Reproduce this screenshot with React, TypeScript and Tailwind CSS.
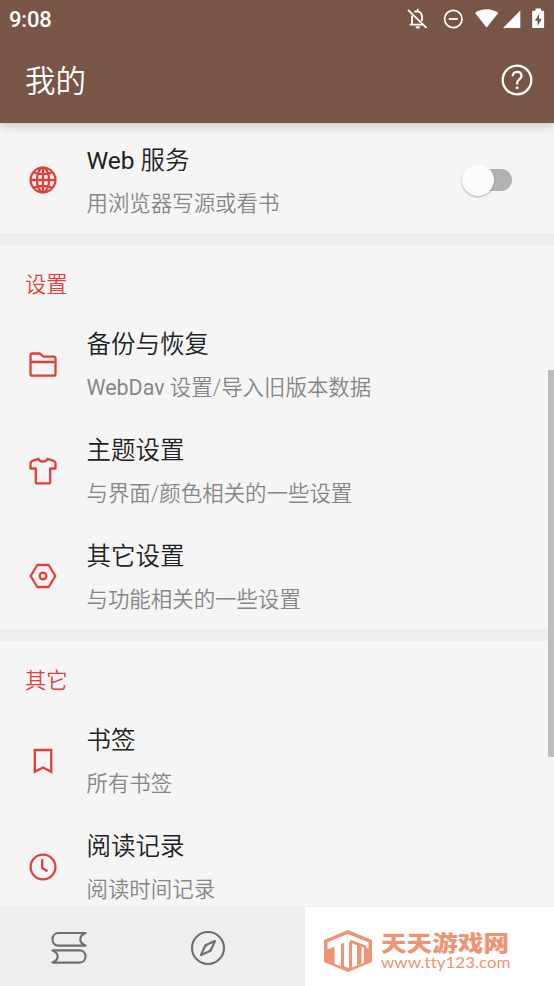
import type { ReactNode } from 'react';

const iconProps = {
  fill: 'none',
  stroke: 'currentColor',
  strokeWidth: 2.3,
  strokeLinejoin: 'round' as const,
};

function GlobeIcon() {
  return (
    <svg width="28" height="28" viewBox="0 0 28 28" {...iconProps} strokeWidth={2.3}>
      <circle cx="14" cy="14" r="12.4" />
      <ellipse cx="14" cy="14" rx="6" ry="12.4" />
      <path d="M14 1.6v24.8M1.6 14h24.8M4.6 6.2c5.4 2.6 13.4 2.6 18.8 0M4.6 21.8c5.4-2.6 13.4-2.6 18.8 0" />
    </svg>
  );
}

function FolderIcon() {
  return (
    <svg width="28" height="28" viewBox="0 0 28 28" {...iconProps}>
      <path d="M1.5 23V4.3C1.5 3 2.2 2.5 3.3 2.5h7.4l3.8 3.2h10c1.3 0 2 .7 2 1.8V23c0 1-.7 1.7-1.8 1.7H3.3c-1.1 0-1.8-.7-1.8-1.7zM1.5 11h25" />
    </svg>
  );
}

function ShirtIcon() {
  return (
    <svg width="28" height="28" viewBox="0 0 28 28" {...iconProps}>
      <path d="M9.5 1.8L4 3.6C2.4 4.2 1.5 5.2 1.5 6.8v4.7h5.3v13.2c0 1.1.6 1.7 1.7 1.7h11c1.1 0 1.7-.6 1.7-1.7V11.5h5.3V6.8c0-1.6-.9-2.6-2.5-3.2l-5.5-1.8C17.3 5.4 10.7 5.4 9.5 1.8z" />
    </svg>
  );
}

function NutIcon() {
  return (
    <svg width="28" height="28" viewBox="0 0 28 28" {...iconProps}>
      <path d="M8.3 3h11.4l6.6 11-6.6 11H8.3L1.7 14z" />
      <circle cx="14" cy="14" r="3.3" />
    </svg>
  );
}

function BookmarkIcon() {
  return (
    <svg width="28" height="28" viewBox="0 0 28 28" {...iconProps} strokeLinejoin="miter">
      <path d="M5.8 3h16.4v21.8L14 20.6l-8.2 4.2z" />
    </svg>
  );
}

function ClockIcon() {
  return (
    <svg width="28" height="28" viewBox="0 0 28 28" {...iconProps}>
      <circle cx="14" cy="14" r="12.4" />
      <path d="M13.2 6.3v8.6l5.3 3.3" />
    </svg>
  );
}

function StatusIcons() {
  return (
    <svg width="140" height="24" viewBox="0 0 140 24" fill="none" className="text-white">
      {/* muted bell */}
      <g stroke="currentColor" strokeWidth="1.8">
        <path d="M2 2.8l18.5 18" />
        <path d="M6 8.500v8.500M3.800 17.700h13M8.300 5c3.400-2 7.700.3 7.700 4.600v4.300M11.700 1.800v2" />
        <path d="M9.800 20.400h4" strokeWidth="2" />
      </g>
      {/* do not disturb */}
      <circle cx="47.300" cy="12" r="8.700" stroke="currentColor" strokeWidth="1.700" />
      <path d="M42.800 12h9" stroke="currentColor" strokeWidth="1.800" />
      {/* wifi, signal */}
      <path d="M69 6c6.800-5 16.500-5 23.300 0L80.600 20.500z" fill="currentColor" />
      <path d="M97 21L114.300 3.500V21z" fill="currentColor" />
      {/* battery */}
      <path d="M129.500 1.500h5.500v2.200h2c.7 0 1.100.4 1.100 1.100V20c0 .7-.4 1.100-1.100 1.100h-9.700c-.7 0-1.100-.4-1.100-1.100V4.800c0-.7.400-1.100 1.100-1.100h2.200z" fill="currentColor" />
      <path d="M133.100 6.700l-4.200 7h2.700v5.300l4.200-7.200h-2.700z" fill="#795548" />
    </svg>
  );
}

function BooksIcon() {
  return (
    <svg width="36" height="34" viewBox="0 0 36 34" {...iconProps} strokeWidth={2.2}>
      <path d="M34.500 2H7.500C3.800 2 1.500 4.900 1.500 8.300s2.300 6.300 6 6.300h27c-2.800-1.200-5.200-3.300-5.200-6.300S31.700 3.200 34.500 2z" />
      <path d="M1.500 19.400h27c3.700 0 6 2.700 6 6.100s-2.300 6.100-6 6.100h-27c2.800-1.200 5.200-3.100 5.200-6.100s-2.400-4.900-5.200-6.100z" />
    </svg>
  );
}

function CompassIcon() {
  return (
    <svg width="36" height="36" viewBox="0 0 36 36" {...iconProps} strokeWidth={2.1}>
      <circle cx="18" cy="18" r="16" />
      <path d="M25 11l-4.300 9.700L11 25l4.300-9.700zM15.500 15.300l5 5.200" />
      <circle cx="18" cy="18" r="2" fill="#eee" stroke="none" />
    </svg>
  );
}

function SiteLogo() {
  return (
    <svg width="50" height="44" viewBox="0 0 50 44">
      <path d="M25 1L49 11v22L25 43 1 33V11z" fill="#ee9475" />
      {/* left arm and post */}
      <path d="M4.500 13.200L24.500 5v7.500l-6.500 2.500v22.500l-6.500-2.700V17.800L4.500 20.300z" fill="#fff" />
      {/* corner column */}
      <path d="M21 13.500l5-2V39l-5-1.800z" fill="#fff" />
      {/* right arm and post */}
      <path d="M24.500 5L45.500 13.200v6.600L41 18v15.800l-12 4.800V14l-4.500-2z" fill="#fff" />
      <path d="M27 10.500l16.500 6.300v2.900l-5-1.900v16.700l-4.500 1.700V16.200L27 13.500z" fill="#ee9475" />
    </svg>
  );
}

function Row({ icon, title, summary, children }: { icon: ReactNode; title: ReactNode; summary: ReactNode; children?: ReactNode }) {
  return (
    <div className="h-[105.8px] shrink-0 flex items-center pl-[29px] pr-[42px]">
      <div className="w-[57.5px] shrink-0 text-[#e0403b]">{icon}</div>
      <div className="flex-1 pt-[3px]">
        <div className="text-[24.5px] leading-[44px] text-[#212121]">{title}</div>
        <div className="text-[21.45px] leading-[42.6px] text-[#868686]">{summary}</div>
      </div>
      {children}
    </div>
  );
}

function SectionTitle({ children }: { children: ReactNode }) {
  return (
    <h2 className="h-[66.6px] shrink-0 pl-[25px] pt-[20px] text-[21.3px] leading-[40px] text-[#e0403b]">
      {children}
    </h2>
  );
}

function Divider() {
  return <div className="h-3 shrink-0 bg-[#eeeeee]" />;
}

export default function App() {
  return (
    <div className="h-[986px] w-[554px] flex flex-col overflow-hidden bg-[#f5f5f5] font-[350] font-[Roboto,'Noto_Sans_CJK_SC',sans-serif]">
      {/* Header */}
      <header className="relative z-10 h-[123px] shrink-0 bg-[#795548] text-white shadow-[0_2px_10px_rgba(0,0,0,0.22)]">
        <div className="h-[38px] flex items-center justify-between pl-[9px] pr-[8px]">
          <span className="pt-0.5 text-[22px] font-medium leading-[38px] tracking-[-0.2px]">9:08</span>
          <StatusIcons />
        </div>
        <div className="h-[84px] flex items-center justify-between pl-[25px] pr-[21px]">
          <h1 className="pt-[3px] text-[30.5px] leading-[44px]">我的</h1>
          <svg width="32" height="32" viewBox="0 0 32 32" fill="none" stroke="currentColor" strokeWidth="2.3">
            <circle cx="16" cy="16" r="14.3" />
            <path d="M11.7 12.3c0-2.6 1.8-4.5 4.4-4.5s4.4 1.7 4.4 4.1c0 3.4-4.3 3.7-4.3 7v1.6" />
            <circle cx="16.2" cy="23.8" r="1.4" fill="currentColor" stroke="none" />
          </svg>
        </div>
      </header>

      {/* Settings list */}
      <main className="flex-1 min-h-0 flex overflow-hidden">
        <div className="flex-1 flex flex-col pt-[4.5px]">
          <Row icon={<GlobeIcon />} title={<><span className="font-normal">Web</span> 服务</>} summary="用浏览器写源或看书">
            <div className="w-[50px] h-8 flex items-center">
              <div className="ml-[6px] w-11 h-[22px] rounded-full bg-[#b2b2b2] flex items-center">
                <div className="-ml-[6px] w-8 h-8 shrink-0 rounded-full bg-[#fcfcfc] shadow-[0_1px_2px_rgba(0,0,0,0.3)]" />
              </div>
            </div>
          </Row>
          <Divider />
          <SectionTitle>设置</SectionTitle>
          <Row icon={<FolderIcon />} title="备份与恢复" summary={<><span className="font-normal">WebDav</span> 设置/导入旧版本数据</>} />
          <Row icon={<ShirtIcon />} title="主题设置" summary="与界面/颜色相关的一些设置" />
          <Row icon={<NutIcon />} title="其它设置" summary="与功能相关的一些设置" />
          <Divider />
          <SectionTitle>其它</SectionTitle>
          <Row icon={<BookmarkIcon />} title="书签" summary="所有书签" />
          <Row icon={<ClockIcon />} title="阅读记录" summary="阅读时间记录" />
        </div>
        <div className="-ml-[6px] mt-[247px] w-[6px] h-[387px] bg-[#bdbdbd]" />
      </main>

      {/* Bottom navigation */}
      <nav className="h-20 shrink-0 flex bg-[#eeeeee] text-[#6f6f6f]">
        <div className="w-[138px] flex items-center justify-center pt-[3px]">
          <BooksIcon />
        </div>
        <div className="w-[139px] flex items-center justify-center pt-[3px]">
          <CompassIcon />
        </div>
        <div className="ml-auto w-[249px] mt-px bg-white flex items-center pl-[18px] pt-2 gap-2">
          <SiteLogo />
          <div className="text-[#ee9475]">
            <div className="text-[25.6px] leading-[22px] h-[22px] scale-y-[0.84] font-black whitespace-nowrap">天天游戏网</div>
            <div className="origin-left scale-x-[1.06] font-[Lato,sans-serif] font-normal text-[16px] leading-[16px] whitespace-nowrap [font-variant-ligatures:none]">www.tty123.com</div>
          </div>
        </div>
      </nav>
    </div>
  );
}
